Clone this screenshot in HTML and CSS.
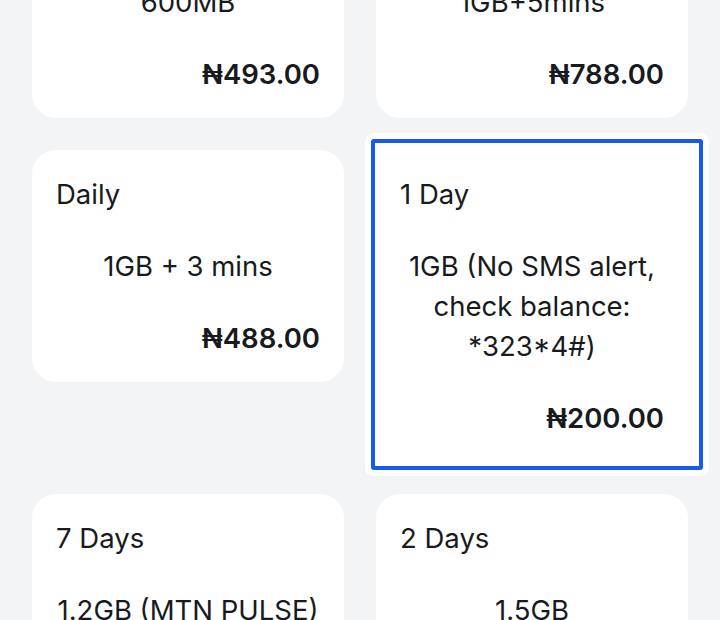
FILE: index.html
```html
<!DOCTYPE html>
<html lang="en">
<head>
<meta charset="utf-8">
<title>Data plans</title>
<link rel="stylesheet" href="styles.css">
</head>
<body>
<div class="viewport">
  <div class="plans">
    <div class="plan">
      <div class="plan-title">Daily</div>
      <div class="plan-desc">600MB</div>
      <div class="plan-price">₦493.00</div>
    </div>
    <div class="plan">
      <div class="plan-title">Daily</div>
      <div class="plan-desc">1GB+5mins</div>
      <div class="plan-price">₦788.00</div>
    </div>
    <div class="plan">
      <div class="plan-title">Daily</div>
      <div class="plan-desc">1GB + 3 mins</div>
      <div class="plan-price">₦488.00</div>
    </div>
    <div class="plan selected">
      <div class="plan-title">1 Day</div>
      <div class="plan-desc">1GB (No SMS alert, check balance: *323*4#)</div>
      <div class="plan-price">₦200.00</div>
    </div>
    <div class="plan">
      <div class="plan-title">7 Days</div>
      <div class="plan-desc">1.2GB (MTN PULSE)</div>
      <div class="plan-price">₦750.00</div>
    </div>
    <div class="plan">
      <div class="plan-title">2 Days</div>
      <div class="plan-desc">1.5GB</div>
      <div class="plan-price">₦600.00</div>
    </div>
  </div>
</div>
</body>
</html>
```

FILE: styles.css
```css
html, body {
  margin: 0;
  padding: 0;
  background: #f3f4f6;
}
body {
  font-family: Inter, "Noto Sans", sans-serif;
  color: #171a21;
  overflow: hidden;
  height: 620px;
}
.viewport {
  height: 620px;
  overflow: hidden;
}
.plans {
  display: grid;
  grid-template-columns: 312px 312px;
  column-gap: 32px;
  row-gap: 32px;
  padding: 0 32px;
  margin-top: -114px;
  align-items: start;
}
.plan {
  position: relative;
  background: #ffffff;
  border-radius: 24px;
  padding: 24px;
  display: flex;
  flex-direction: column;
  gap: 32px;
  font-size: 27.5px;
  line-height: 40px;
}
.plan-title {
  text-align: left;
}
.plan-desc {
  text-align: center;
}
.plan-price {
  text-align: right;
  font-weight: 600;
}
.selected {
  z-index: 0;
  box-shadow: inset 0 0 0 1px #f1f2f5;
}
.selected::before {
  content: "";
  position: absolute;
  top: -11px;
  left: -5px;
  right: -15px;
  bottom: -8px;
  background: #ffffff;
  border: 4px solid #1559ef;
  border-radius: 3px;
  box-shadow: 0 0 0 6px #ffffff;
  z-index: -1;
}
```
